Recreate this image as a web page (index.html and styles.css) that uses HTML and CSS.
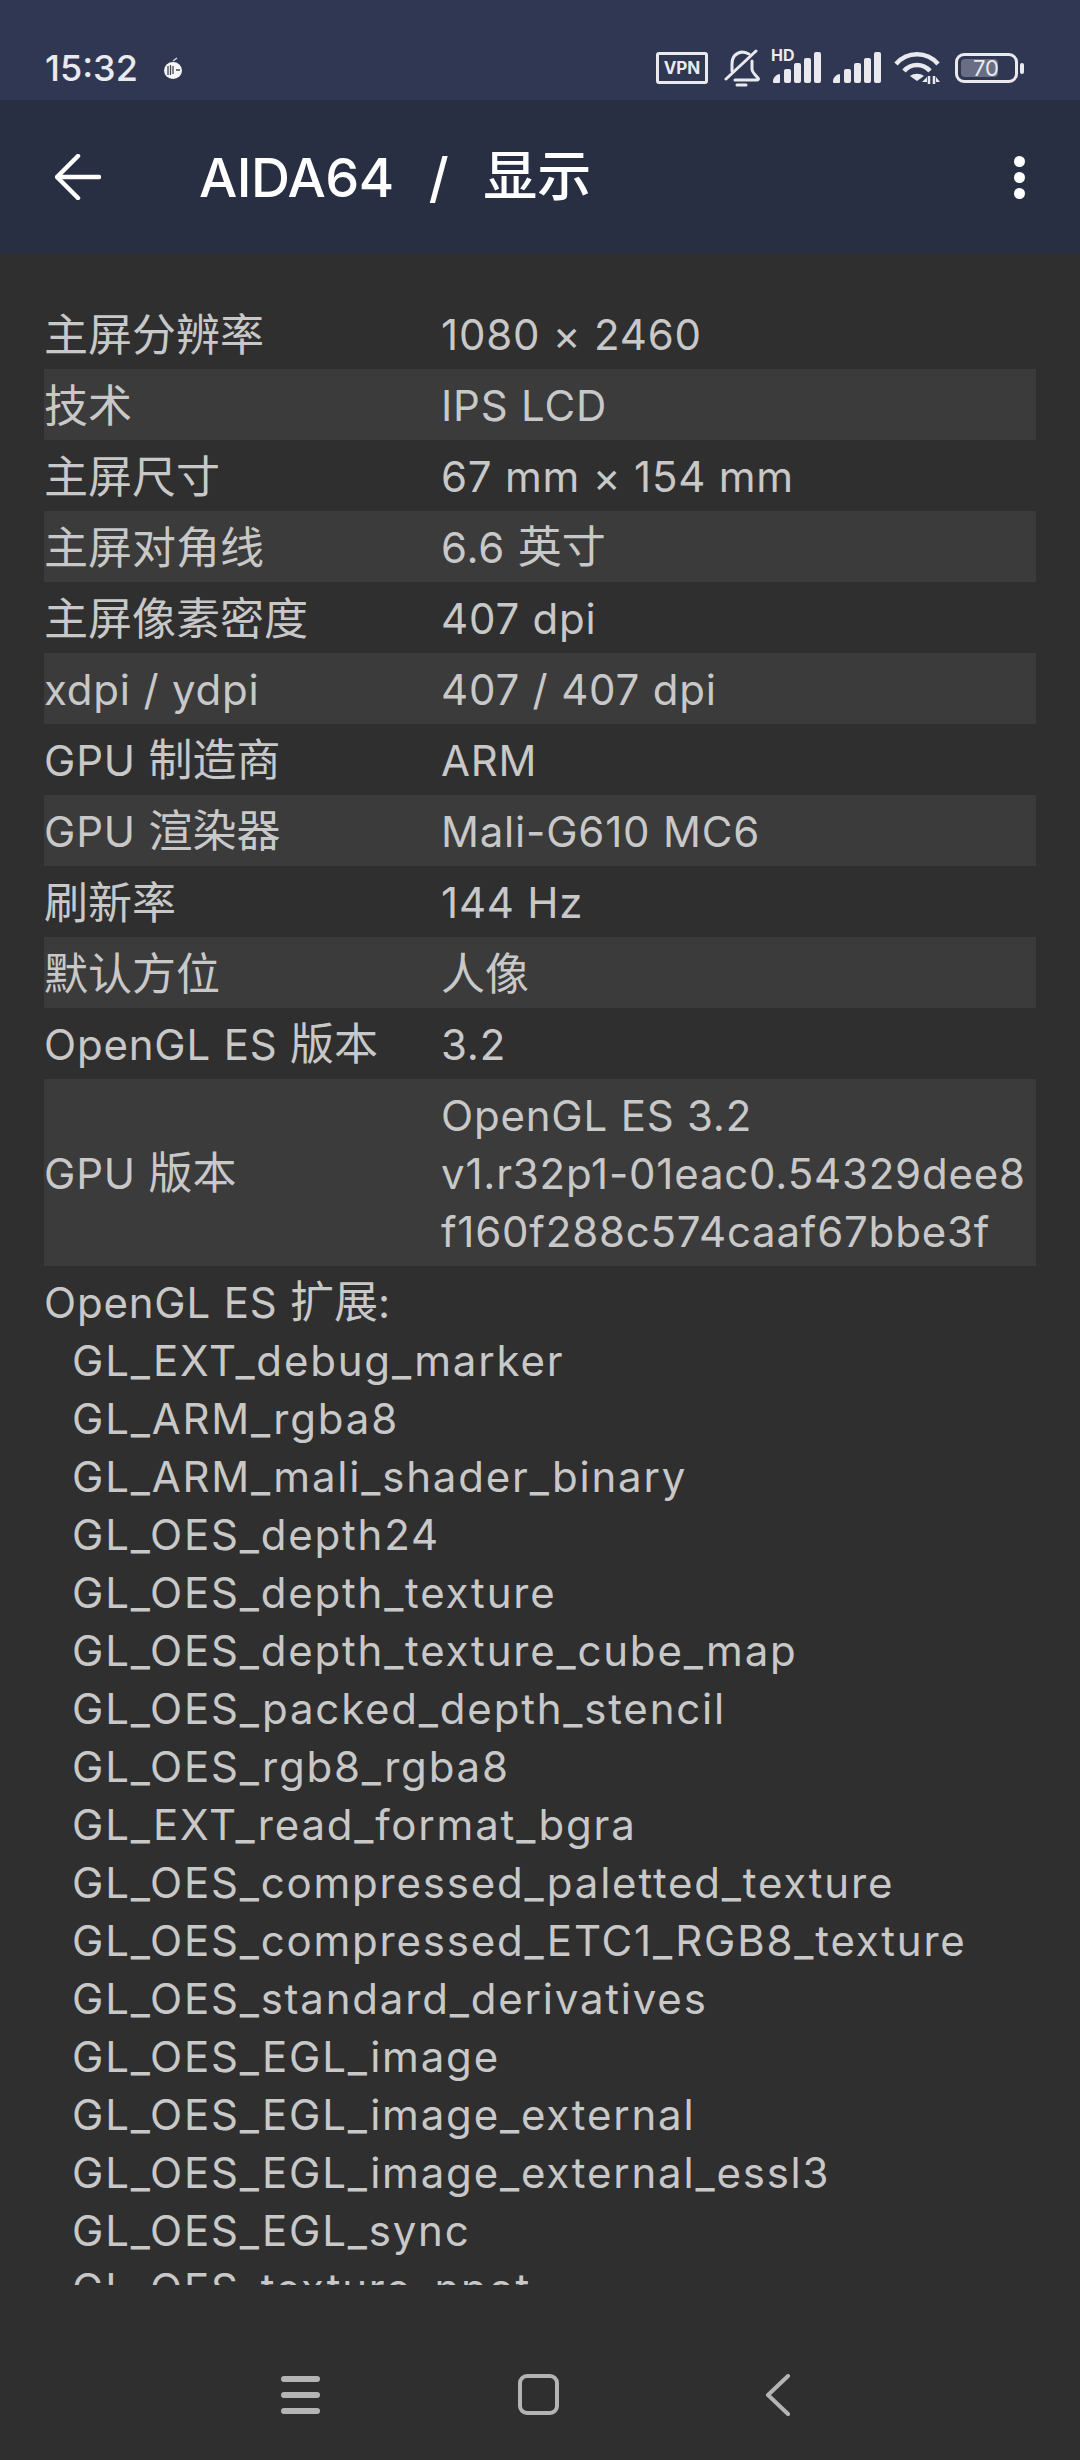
FILE: index.html
```html
<!DOCTYPE html>
<html>
<head>
  <meta charset="UTF-8">
  <title>AIDA64 / 显示</title>
  <link rel="stylesheet" href="styles.css">
</head>
<body>
  <div class="phone">
    <div class="statusbar">
      <div class="status-left">
        <span class="clock">15:32</span>
        <svg class="app-icon" width="20" height="24" viewBox="0 0 20 24"><ellipse cx="10" cy="14.500" rx="9" ry="8.500" fill="#f6f6f6"/><path d="M10 5 L14 2" stroke="#e4e4e4" stroke-width="1.200"/><path d="M5 10v9M7.500 9v10M10 10v8M13 14h4" stroke="#40455a" stroke-width="1.300"/></svg>
      </div>
      <div class="status-right">
        <span class="vpn">VPN</span>
        <svg class="bell" width="36" height="38" viewBox="0 0 36 38" fill="none" stroke="#e9e9ee" stroke-width="3" stroke-linecap="round" stroke-linejoin="round"><path d="M8 22V15C8 8 12 4 18 3c3 0 5 1 7 2"/><path d="M28 12v8c0 3 3 6 6 9 1 1 0 2-1 2H11"/><path d="M2 30L32 2"/><path d="M13 36h9"/></svg>
        <div class="signal-hd">
          <span class="hd">HD</span>
          <svg width="50" height="32" viewBox="0 0 50 32" fill="#e9e9ee"><path d="M3 31h5a1 1 0 0 0 1-1v-7a1 1 0 0 0-1-1c-3 1-6 4-6 7v1a1 1 0 0 0 1 1z"/><rect x="13" y="17" width="7" height="14" rx="2"/><rect x="23" y="11" width="7" height="20" rx="2"/><rect x="33" y="6" width="7" height="25" rx="2"/><rect x="43" y="0" width="7" height="31" rx="2"/></svg>
        </div>
        <svg class="signal" width="48" height="32" viewBox="0 0 48 32" fill="#e9e9ee"><path d="M1 31h5a1 1 0 0 0 1-1v-7a1 1 0 0 0-1-1c-3 1-6 4-6 7v1a1 1 0 0 0 1 1z"/><rect x="11" y="17" width="7" height="14" rx="2"/><rect x="21" y="11" width="7" height="20" rx="2"/><rect x="31" y="6" width="7" height="25" rx="2"/><rect x="41" y="0" width="7" height="31" rx="2"/></svg>
        <svg class="wifi" width="46" height="34" viewBox="0 0 46 34" fill="none" stroke="#e9e9ee" stroke-width="4.500"><path d="M2 13C13 0 33 0 44 13"/><path d="M10 20c7-8 19-8 26 0"/><path d="M23 30l-7-5c4-3 10-3 14 0z" fill="#e9e9ee" stroke="none"/><path d="M35 25v8M40 25v8" stroke-width="2.500"/><path d="M28 31l5-5v5zM42 26l4 5h-4z" fill="#e9e9ee" stroke="none"/></svg>
        <div class="battery">
          <div class="battery-body"><div class="battery-fill"></div><span class="battery-num">70</span></div>
          <div class="battery-nub"></div>
        </div>
      </div>
    </div>

    <div class="toolbar">
      <svg class="back" width="46" height="46" viewBox="0 0 46 46" fill="none" stroke="#fff" stroke-width="4.500" stroke-linecap="round" stroke-linejoin="round"><path d="M44 23H3"/><path d="M23 2L2 23l21 21"/></svg>
      <div class="title"><span>AIDA64</span><span class="slash">/</span><span class="title-cjk">显示</span></div>
      <div class="more"><i></i><i></i><i></i></div>
    </div>

    <div class="content">
      <div class="row"><div class="label cjk">主屏分辨率</div><div class="value">1080 × 2460</div></div>
      <div class="row"><div class="label cjk">技术</div><div class="value">IPS LCD</div></div>
      <div class="row"><div class="label cjk">主屏尺寸</div><div class="value">67 mm × 154 mm</div></div>
      <div class="row"><div class="label cjk">主屏对角线</div><div class="value">6.6 <span class="cjk">英寸</span></div></div>
      <div class="row"><div class="label cjk">主屏像素密度</div><div class="value">407 dpi</div></div>
      <div class="row"><div class="label">xdpi / ydpi</div><div class="value">407 / 407 dpi</div></div>
      <div class="row"><div class="label">GPU <span class="cjk">制造商</span></div><div class="value">ARM</div></div>
      <div class="row"><div class="label">GPU <span class="cjk">渲染器</span></div><div class="value">Mali-G610 MC6</div></div>
      <div class="row"><div class="label cjk">刷新率</div><div class="value">144 Hz</div></div>
      <div class="row"><div class="label cjk">默认方位</div><div class="value cjk">人像</div></div>
      <div class="row"><div class="label">OpenGL ES <span class="cjk">版本</span></div><div class="value">3.2</div></div>
      <div class="row"><div class="label">GPU <span class="cjk">版本</span></div><div class="value">OpenGL ES 3.2<br>v1.r32p1-01eac0.54329dee8<br>f160f288c574caaf67bbe3f</div></div>
      <div class="ext-title">OpenGL ES <span class="cjk">扩展</span>:</div>
      <ul class="ext-list">
        <li>GL_EXT_debug_marker</li>
        <li>GL_ARM_rgba8</li>
        <li>GL_ARM_mali_shader_binary</li>
        <li>GL_OES_depth24</li>
        <li>GL_OES_depth_texture</li>
        <li>GL_OES_depth_texture_cube_map</li>
        <li>GL_OES_packed_depth_stencil</li>
        <li>GL_OES_rgb8_rgba8</li>
        <li>GL_EXT_read_format_bgra</li>
        <li>GL_OES_compressed_paletted_texture</li>
        <li>GL_OES_compressed_ETC1_RGB8_texture</li>
        <li>GL_OES_standard_derivatives</li>
        <li>GL_OES_EGL_image</li>
        <li>GL_OES_EGL_image_external</li>
        <li>GL_OES_EGL_image_external_essl3</li>
        <li>GL_OES_EGL_sync</li>
        <li>GL_OES_texture_npot</li>
      </ul>
    </div>

    <div class="navbar">
      <div class="nav-menu"><i></i><i></i><i></i></div>
      <div class="nav-home"></div>
      <svg class="nav-back" width="26" height="42" viewBox="0 0 26 42" fill="none" stroke="#b4b4b4" stroke-width="4" stroke-linecap="round" stroke-linejoin="round"><path d="M23 2L3 21l20 19"/></svg>
    </div>
  </div>
</body>
</html>
```

FILE: styles.css
```css
html, body {
  margin: 0;
  padding: 0;
  background: #2f2f2f;
}

.phone {
  width: 1080px;
  height: 2460px;
  display: flex;
  flex-direction: column;
  overflow: hidden;
  font-family: Inter, "Noto Sans CJK SC", sans-serif;
}

.statusbar {
  height: 100px;
  flex: none;
  background: #2f3752;
  display: flex;
  justify-content: space-between;
  align-items: center;
  padding: 36px 56px 0 45px;
  box-sizing: border-box;
  color: #e9e9ee;
}

.status-left {
  display: flex;
  align-items: center;
  gap: 25px;
}

.clock {
  font-size: 36px;
  font-weight: 500;
}

.status-right {
  display: flex;
  align-items: center;
  gap: 12px;
}

.vpn {
  width: 52px;
  height: 32px;
  box-sizing: border-box;
  border: 3px solid #e9e9ee;
  border-radius: 3px;
  font-size: 17px;
  font-weight: 700;
  line-height: 26px;
  text-align: center;
  margin-right: 4px;
}

.bell {
  margin-right: -1px;
}

.signal {
  margin-right: 1px;
}

.wifi {
  margin-right: 3px;
}

.signal-hd {
  position: relative;
  height: 32px;
}

.hd {
  position: absolute;
  left: 0;
  top: -7px;
  font-size: 16px;
  font-weight: 700;
}

.battery {
  display: flex;
  align-items: center;
  gap: 2px;
}

.battery-body {
  position: relative;
  width: 63px;
  height: 30px;
  box-sizing: border-box;
  border: 3px solid #e9e9ee;
  border-radius: 9px;
}

.battery-fill {
  width: 37px;
  height: 18px;
  margin: 3px;
  background: #6a6e85;
  border-radius: 4px;
}

.battery-num {
  position: absolute;
  left: 15px;
  top: -3px;
  font-size: 22px;
  line-height: 30px;
}

.battery-nub {
  width: 4px;
  height: 11px;
  background: #e9e9ee;
  border-radius: 2px;
}

.toolbar {
  height: 154px;
  flex: none;
  background: #292f43;
  display: flex;
  align-items: center;
  box-sizing: border-box;
  padding: 0 55px;
  color: #fff;
}

.title {
  flex: 1;
  margin-left: 98px;
  font-size: 54px;
  font-weight: 500;
  letter-spacing: -0.5px;
  display: flex;
  align-items: center;
  gap: 35px;
}

.title-cjk {
  font-size: 54px;
  line-height: 1;
  letter-spacing: 0;
}

.more i {
  display: block;
  width: 11px;
  height: 11px;
  background: #fff;
  border-radius: 50%;
  margin: 5px 0;
}

.content {
  height: 2031px;
  flex: none;
  box-sizing: border-box;
  padding: 44px 44px 0;
  overflow: hidden;
  font-size: 42px;
  line-height: 58px;
  letter-spacing: 0.8px;
  color: #c8c8c8;
}

.cjk {
  font-size: 44px;
  line-height: 1;
  letter-spacing: 0;
}

.row {
  display: flex;
  align-items: center;
  min-height: 71px;
  padding: 8px 6px 5px 0;
  box-sizing: border-box;
}

.row:nth-child(even) {
  background: #3b3b3b;
}

.label {
  width: 397px;
  flex: none;
}

.value {
  white-space: nowrap;
}

.ext-title {
  margin-top: 8px;
}

.ext-list {
  list-style: none;
  margin: 0;
  padding: 0 0 0 28px;
  letter-spacing: 1.8px;
}

.navbar {
  flex: 1;
  background: #2f2f2f;
  display: flex;
  align-items: center;
  padding: 44px 0 0 281px;
}

.nav-menu {
  width: 39px;
}

.nav-menu i {
  display: block;
  height: 6px;
  background: #b4b4b4;
  border-radius: 3px;
  margin: 10px 0;
}

.nav-home {
  width: 41px;
  height: 41px;
  box-sizing: border-box;
  border: 4px solid #b4b4b4;
  border-radius: 9px;
  margin-left: 198px;
}

.nav-back {
  margin-left: 206px;
}
```
